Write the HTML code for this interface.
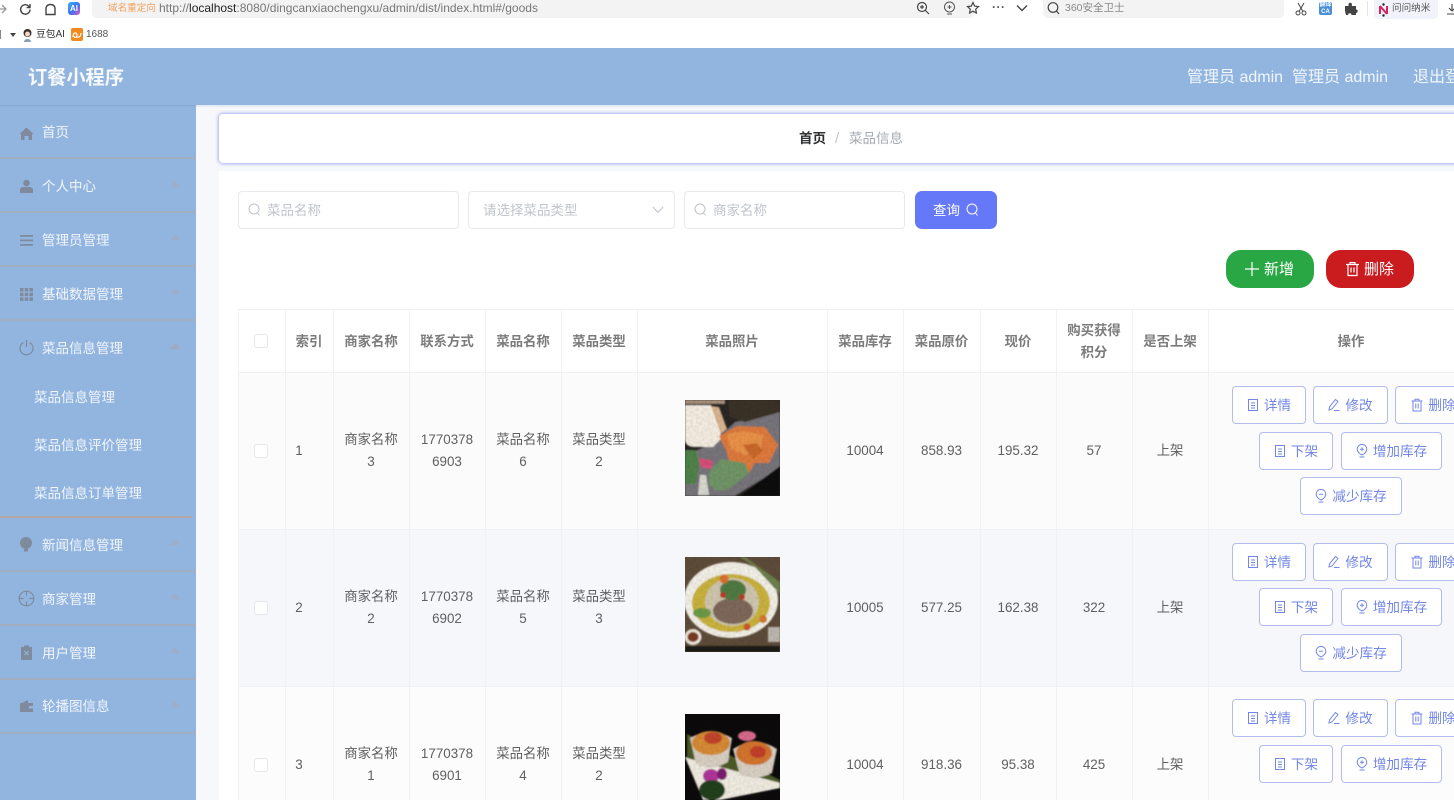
<!DOCTYPE html>
<html lang="zh"><head><meta charset="utf-8"><title>订餐小程序</title>
<style>
html,body{margin:0;padding:0;width:1454px;height:800px;overflow:hidden;background:#fff}
body{position:relative;font-family:"Liberation Sans","Noto Sans CJK SC",sans-serif;color:#555}
.a{position:absolute;white-space:nowrap}
svg{position:absolute;overflow:visible}
.hd{background:#92b5e0;position:absolute}
.menu{position:absolute;left:42px;font-size:13.5px;color:#f1f5fb;line-height:20px;white-space:nowrap;transform:translateY(1px)}
.sub{left:34px}
.dv{position:absolute;left:0;width:195px;height:2px;background:#a2afc0}
.arrow{position:absolute;left:170px;width:10px;height:6px;opacity:.85}
.ic{position:absolute;left:19px;width:15px;height:15px}
.vl{position:absolute;width:1px;top:309px;height:491px;background:#f0f1f5}
.hl{position:absolute;height:1px;left:238px;width:1216px;background:#f0f1f5}
.th{position:absolute;top:309px;height:63px;box-sizing:border-box;padding-top:2px;display:flex;align-items:center;justify-content:center;text-align:center;font-size:13.4px;font-weight:bold;color:#7b7b7b;line-height:19px}
.td{position:absolute;height:157px;display:flex;align-items:center;justify-content:center;text-align:center;font-size:13.4px;color:#5f5f5f;line-height:22px}
.cb{position:absolute;left:254px;width:12px;height:12px;border:1px solid #e6e7ec;border-radius:3px;background:#fff}
.b{position:absolute;height:36px;border:1px solid #b3bcec;border-radius:4px;background:#fff;color:#7286e6;font-size:13.6px;line-height:38px;box-sizing:content-box;text-align:center;white-space:nowrap}
.b svg{position:static;display:inline-block;width:12px;height:14px;vertical-align:-2px;margin-right:5px;fill:none;stroke:#7286e6;stroke-width:1}
.inp{position:absolute;top:191px;height:36px;background:#fff;border:1px solid #e8e9ee;border-radius:4px;font-size:13.5px;color:#c0c4cc;line-height:36px}
</style></head><body>

<svg width="0" height="0" style="left:0;top:0">
<defs>
<symbol id="i-doc" viewBox="0 0 12 14"><path d="M1.500 1.500h9v11h-9zM4 5h4M4 7.500h4M4 10h4"/></symbol>
<symbol id="i-pen" viewBox="0 0 12 14"><path d="M7.500 1.500l2.500 2-6 7.500-3 1 .5-3zM6 12.500h5.500"/></symbol>
<symbol id="i-del" viewBox="0 0 12 14"><path d="M.5 3h11M4 3V1.200h4V3M2 3v10h8V3M4.800 5.500v5M7.200 5.500v5"/></symbol>
<symbol id="i-add" viewBox="0 0 12 14"><path d="M6 11C3 9.500 1.200 7.500 1.200 5.200a4.800 4.800 0 0 1 9.600 0C10.800 7.500 9 9.500 6 11zM4 5.200h4M6 3.200v4M3.500 13h5"/></symbol>
<symbol id="i-sub" viewBox="0 0 12 14"><path d="M6 11C3 9.500 1.200 7.500 1.200 5.200a4.800 4.800 0 0 1 9.600 0C10.800 7.500 9 9.500 6 11zM4 5.200h4M3.500 13h5"/></symbol>
<filter id="n" x="0" y="0" width="100%" height="100%"><feTurbulence type="fractalNoise" baseFrequency=".35" numOctaves="2" seed="4"/><feColorMatrix type="matrix" values="0 0 0 0 0  0 0 0 0 0  0 0 0 0 0  1.800 0 0 0 -.55"/></filter>
</defs></svg>

<!-- browser chrome -->
<div class="a" style="left:92px;top:0;width:882px;height:18px;background:#f3f3f3;border-radius:0 0 5px 5px"></div>
<div class="a" style="left:1043px;top:0;width:241px;height:18px;background:#f3f3f3;border-radius:0 0 5px 5px"></div>
<div class="a" style="left:1374px;top:0;width:64px;height:19px;background:#f1f3fb;border-radius:0 0 5px 5px"></div>
<svg style="left:0;top:2px" width="10" height="14" fill="none" stroke="#999" stroke-width="1.3"><path d="M-1 7H5M2 3l4 4-4 4"/></svg>
<svg style="left:19px;top:3px" width="13" height="13" fill="none" stroke="#444" stroke-width="1.4"><path d="M11 6.500A4.700 4.700 0 1 1 9.500 3L11 4.400M11 1v3.600H7.600"/></svg>
<svg style="left:44px;top:3px" width="13" height="13" fill="none" stroke="#444" stroke-width="1.4"><path d="M2 11.500V6q0-4.500 4.500-4.500T11 6v5.500z"/></svg>
<div class="a" style="left:68px;top:2px;width:12px;height:13px;border-radius:3px;background:linear-gradient(135deg,#33b5f5,#3f6ff0 55%,#e35bc0);color:#fff;font-size:8px;font-weight:bold;line-height:13px;text-align:center">AI</div>
<div class="a" style="left:108px;top:2px;font-size:9.600px;line-height:14px;color:#f0a25c">域名重定向</div>
<div class="a" style="left:159px;top:0;font-size:12px;line-height:16px;color:#777">http://<span style="color:#222">localhost</span>:8080/dingcanxiaochengxu/admin/dist/index.html#/goods</div>
<svg style="left:916px;top:1px" width="14" height="14" fill="none" stroke="#444" stroke-width="1.200"><circle cx="6" cy="6" r="4.500"/><path d="M9.500 9.500L13 13M4 6h4M6 4v4"/></svg>
<svg style="left:943px;top:1px" width="13" height="14" fill="none" stroke="#555" stroke-width="1"><circle cx="6.500" cy="6" r="5"/><path d="M4.500 6h4M6.500 4v4M4 13h5"/></svg>
<svg style="left:966px;top:1px" width="14" height="14" fill="none" stroke="#444" stroke-width="1.200"><path d="M7 1.500l1.700 3.600 3.800.5-2.800 2.600.7 3.800L7 10.200 3.600 12l.7-3.800L1.500 5.600l3.800-.5z"/></svg>
<div class="a" style="left:992px;top:0;font-size:12px;line-height:14px;font-weight:bold;color:#555;letter-spacing:.5px">···</div>
<svg style="left:1016px;top:4px" width="12" height="9" fill="none" stroke="#444" stroke-width="1.400"><path d="M1 1.500l5 5 5-5"/></svg>
<svg style="left:1047px;top:1px" width="14" height="15" fill="none" stroke="#444" stroke-width="1.200"><circle cx="6" cy="6.500" r="4.800"/><path d="M9.500 10l2.500 3"/></svg>
<div class="a" style="left:1065px;top:1px;font-size:10.500px;line-height:15px;color:#888">360安全卫士</div>
<svg style="left:1295px;top:2px" width="12" height="14" fill="none" stroke="#444" stroke-width="1"><circle cx="3" cy="11" r="2"/><circle cx="9" cy="11" r="2"/><path d="M4 9.500L9 1M8 9.500L3 1"/></svg>
<div class="a" style="left:1319px;top:2px;width:13px;height:13px;border-radius:2px;background:#4a8fd8;color:#fff;font-size:6px;line-height:6.500px;text-align:center;font-weight:bold">翻译<br>CA</div>
<svg style="left:1344px;top:2px" width="14" height="13" fill="#444"><path d="M1 4h3.500V2.500a1.700 1.700 0 0 1 3.400 0V4H12v3.500a1.700 1.700 0 0 1 0 3.400V13H7.500a1.700 1.700 0 0 0-3.400 0H2L1 9z"/></svg>
<div class="a" style="left:1367px;top:1px;width:1px;height:15px;background:#e5e5e5"></div>
<svg style="left:1378px;top:3px" width="11" height="14"><path d="M2 3v8M9 3v8M2 3l7 8" stroke="#d9265e" stroke-width="2" fill="none"/><circle cx="5.500" cy="1.500" r="1.200" fill="#222"/><circle cx="5.500" cy="12.500" r="1.200" fill="#222"/></svg>
<div class="a" style="left:1392px;top:2px;font-size:9.600px;line-height:14px;color:#555">问问纳米</div>
<svg style="left:1447px;top:3px" width="10" height="13" fill="none" stroke="#444" stroke-width="1.100"><path d="M5 1v7M2 5l3 3 3-3M0 11h10"/></svg>

<div class="a" style="left:-2px;top:30px;width:3px;height:9px;background:#888"></div>
<div class="a" style="left:10px;top:33px;width:0;height:0;border:3px solid transparent;border-top:4px solid #444;border-bottom:0"></div>
<svg style="left:22px;top:28px" width="11" height="14"><circle cx="5.500" cy="5" r="4" fill="#3b2f2c"/><circle cx="5.500" cy="6" r="2.500" fill="#f1d8c8"/><path d="M2 14c0-4 7-4 7 0z" fill="#88a0bf"/></svg>
<div class="a" style="left:36px;top:28px;font-size:9.800px;line-height:14px;color:#333">豆包AI</div>
<div class="a" style="left:71px;top:28px;width:12px;height:13px;border-radius:2px;background:#f28a22"></div>
<svg style="left:72px;top:31px" width="10" height="8" fill="none" stroke="#fff" stroke-width="1.200"><path d="M1 6c0-5 4-5 4-2s-3 3-3 1M5 6c2 1 4-1 4-4"/></svg>
<div class="a" style="left:86px;top:28px;font-size:10px;line-height:14px;color:#555">1688</div>

<!-- header -->
<div class="hd" style="left:0;top:48px;width:1454px;height:58px"></div>
<div class="a" style="left:28px;top:65px;font-size:19.200px;line-height:28px;font-weight:bold;color:#f6f9fd">订餐小程序</div>
<div class="a" style="left:1187px;top:67px;font-size:16px;line-height:22px;color:#f2f6fc">管理员 admin</div>
<div class="a" style="left:1292px;top:67px;font-size:16px;line-height:22px;color:#f2f6fc">管理员 admin</div>
<div class="a" style="left:1413px;top:67px;font-size:16px;line-height:22px;color:#f2f6fc">退出登录</div>

<!-- sidebar -->
<div class="hd" style="left:0;top:106px;width:196px;height:694px"></div>
<div class="a" style="left:0;top:105px;width:196px;height:1px;background:#84a6d1"></div>
<div class="a" style="left:196px;top:106px;width:1258px;height:694px;background:#f6f8fb"></div>
<div class="a" style="left:196px;top:105px;width:1258px;height:2px;background:#e4ebf5"></div>

<div class="dv" style="top:157px"></div><div class="dv" style="top:211px"></div><div class="dv" style="top:265px"></div><div class="dv" style="top:319px"></div><div class="dv" style="top:516px;background:#b4a7a8;width:192px"></div><div class="dv" style="top:570px"></div><div class="dv" style="top:624px"></div><div class="dv" style="top:678px"></div><div class="dv" style="top:732px"></div>

<div class="menu" style="top:122px">首页</div>
<div class="menu" style="top:176px">个人中心</div>
<div class="menu" style="top:230px">管理员管理</div>
<div class="menu" style="top:284px">基础数据管理</div>
<div class="menu" style="top:338px">菜品信息管理</div>
<div class="menu sub" style="top:387px">菜品信息管理</div>
<div class="menu sub" style="top:435px">菜品信息评价管理</div>
<div class="menu sub" style="top:483px">菜品信息订单管理</div>
<div class="menu" style="top:535px">新闻信息管理</div>
<div class="menu" style="top:589px">商家管理</div>
<div class="menu" style="top:643px">用户管理</div>
<div class="menu" style="top:696px">轮播图信息</div>

<svg class="ic" style="top:126px" viewBox="0 0 15 15" fill="#7f8b9c"><path d="M7.500 1.500L14.500 8H13v6H9.500v-4h-4v4H2V8H.5z"/></svg>
<svg class="ic" style="top:179px" viewBox="0 0 15 15" fill="#7f8b9c"><circle cx="7.500" cy="4" r="3.300"/><path d="M1 14v-3c0-2 2-3 3.500-3h6c1.500 0 3.500 1 3.500 3v3z"/></svg>
<svg class="ic" style="top:233px" viewBox="0 0 15 15" fill="#7f8b9c"><rect x="1" y="2" width="13" height="1.800"/><rect x="1" y="6.500" width="13" height="1.800"/><rect x="1" y="11" width="13" height="1.800"/></svg>
<svg class="ic" style="top:287px" viewBox="0 0 15 15" fill="#7f8b9c"><rect x="1" y="1" width="3.500" height="3.500"/><rect x="5.700" y="1" width="3.500" height="3.500"/><rect x="10.400" y="1" width="3.500" height="3.500"/><rect x="1" y="5.700" width="3.500" height="3.500"/><rect x="5.700" y="5.700" width="3.500" height="3.500"/><rect x="10.400" y="5.700" width="3.500" height="3.500"/><rect x="1" y="10.400" width="3.500" height="3.500"/><rect x="5.700" y="10.400" width="3.500" height="3.500"/><rect x="10.400" y="10.400" width="3.500" height="3.500"/></svg>
<svg class="ic" style="top:340px" viewBox="0 0 15 15" fill="none" stroke="#7f8b9c" stroke-width="1.200"><path d="M4.500 2.500a6.500 6.500 0 1 0 6 0M7.500 0v7"/></svg>
<svg class="ic" style="top:537px" viewBox="0 0 15 15" fill="#7f8b9c"><circle cx="7" cy="6" r="6"/><rect x="5" y="12" width="4" height="2.500"/></svg>
<svg class="ic" style="top:590px;left:18px;width:17px;height:17px" viewBox="0 0 15 15" fill="none" stroke="#7f8b9c" stroke-width="1"><circle cx="7.500" cy="7.500" r="6.500"/><path d="M7.500 1v4M7.500 10v4M1 7.500h4M10 7.500h4"/></svg>
<svg class="ic" style="top:645px" viewBox="0 0 15 15" fill="#7f8b9c"><path d="M2 2h3V.5h5V2h3v13H2z"/><path d="M5.500 6l4 4M9.500 6l-4 4" stroke="#92b5e0" stroke-width="1"/></svg>
<svg class="ic" style="top:698px" viewBox="0 0 15 15" fill="#7f8b9c"><path d="M1 5h13v9H1zM3 5l6-3v3z"/><rect x="10" y="8" width="4" height="2.500" fill="#92b5e0"/></svg>

<svg class="arrow" style="top:181px" viewBox="0 0 10 6" fill="#9fadc6"><path d="M0 6l5-6 5 6z"/></svg>
<svg class="arrow" style="top:234px" viewBox="0 0 10 6" fill="#9fadc6"><path d="M0 6l5-6 5 6z"/></svg>
<svg class="arrow" style="top:288px" viewBox="0 0 10 6" fill="#9fadc6"><path d="M0 6l5-6 5 6z"/></svg>
<svg class="arrow" style="top:343px" viewBox="0 0 10 6" fill="#a3a6ba"><path d="M0 6l5-6 5 6z"/></svg>
<svg class="arrow" style="top:539px" viewBox="0 0 10 6" fill="#9fadc6"><path d="M0 6l5-6 5 6z"/></svg>
<svg class="arrow" style="top:593px" viewBox="0 0 10 6" fill="#9fadc6"><path d="M0 6l5-6 5 6z"/></svg>
<svg class="arrow" style="top:647px" viewBox="0 0 10 6" fill="#9fadc6"><path d="M0 6l5-6 5 6z"/></svg>
<svg class="arrow" style="top:701px" viewBox="0 0 10 6" fill="#9fadc6"><path d="M0 6l5-6 5 6z"/></svg>

<!-- breadcrumb -->
<div class="a" style="left:219px;top:114px;width:1260px;height:49px;background:#fff;border-radius:4px;box-shadow:0 0 3px 1px #a9aef0"></div>
<div class="a" style="left:799px;top:129px;font-size:13.500px;line-height:20px;font-weight:bold;color:#303133">首页</div>
<div class="a" style="left:835px;top:129px;font-size:15px;line-height:20px;color:#c0c4cc">/</div>
<div class="a" style="left:849px;top:129px;font-size:13.500px;line-height:20px;color:#a4a9b3">菜品信息</div>

<!-- panel -->
<div class="a" style="left:219px;top:171px;width:1235px;height:629px;background:#fff"></div>

<div class="inp" style="left:238px;width:219px"></div>
<svg style="left:248px;top:203px" width="13" height="14" fill="none" stroke="#c0c4cc" stroke-width="1"><circle cx="6" cy="6" r="5"/><path d="M9.500 10l2 2.500"/></svg>
<div class="a" style="left:267px;top:201px;font-size:13.500px;line-height:20px;color:#c0c4cc">菜品名称</div>
<div class="inp" style="left:468px;width:205px"></div>
<div class="a" style="left:483px;top:201px;font-size:13.500px;line-height:20px;color:#c0c4cc">请选择菜品类型</div>
<svg style="left:652px;top:206px" width="12" height="8" fill="none" stroke="#c0c4cc" stroke-width="1"><path d="M1 1l5 5.500L11 1"/></svg>
<div class="inp" style="left:684px;width:219px"></div>
<svg style="left:694px;top:203px" width="13" height="14" fill="none" stroke="#c0c4cc" stroke-width="1"><circle cx="6" cy="6" r="5"/><path d="M9.500 10l2 2.500"/></svg>
<div class="a" style="left:713px;top:201px;font-size:13.500px;line-height:20px;color:#c0c4cc">商家名称</div>
<div class="a" style="left:915px;top:191px;width:82px;height:38px;border-radius:7px;background:#6478f8"></div>
<div class="a" style="left:933px;top:201px;font-size:13.500px;line-height:20px;color:#fff">查询</div>
<svg style="left:966px;top:203px" width="13" height="14" fill="none" stroke="#fff" stroke-width="1"><circle cx="6" cy="6" r="5"/><path d="M9.500 10l2 2.500"/></svg>

<div class="a" style="left:1226px;top:250px;width:88px;height:38px;border-radius:15px;background:#29a745"></div>
<svg style="left:1245px;top:262px" width="14" height="14" stroke="#fff" stroke-width="1.200"><path d="M7 0v14M0 7h14"/></svg>
<div class="a" style="left:1264px;top:259px;font-size:15px;line-height:22px;color:#fff">新增</div>
<div class="a" style="left:1326px;top:250px;width:88px;height:38px;border-radius:15px;background:#ca1c1f"></div>
<svg style="left:1346px;top:262px" width="13" height="14" fill="none" stroke="#fff" stroke-width="1.200"><path d="M0 2.500h13M4 2.500V.6h5v1.900M2 2.500v11h9v-11M5 5.500v5M8 5.500v5"/></svg>
<div class="a" style="left:1364px;top:259px;font-size:15px;line-height:22px;color:#fff">删除</div>

<!-- table backgrounds -->
<div class="a" style="left:238px;top:373px;width:1216px;height:156px;background:#fbfbfc"></div>
<div class="a" style="left:238px;top:530px;width:1216px;height:156px;background:#f5f7fb"></div>
<div class="a" style="left:238px;top:687px;width:1216px;height:113px;background:#fcfcfd"></div>
<div class="hl" style="top:309px"></div><div class="hl" style="top:372px"></div><div class="hl" style="top:529px"></div><div class="hl" style="top:686px"></div>
<div class="vl" style="left:238px"></div><div class="vl" style="left:285px"></div><div class="vl" style="left:333px"></div><div class="vl" style="left:409px"></div><div class="vl" style="left:485px"></div><div class="vl" style="left:561px"></div><div class="vl" style="left:637px"></div><div class="vl" style="left:827px"></div><div class="vl" style="left:903px"></div><div class="vl" style="left:980px"></div><div class="vl" style="left:1056px"></div><div class="vl" style="left:1132px"></div><div class="vl" style="left:1208px"></div>

<!-- table header -->
<div class="cb" style="top:334px;left:254px"></div>
<div class="th" style="left:285px;width:48px">索引</div>
<div class="th" style="left:333px;width:76px">商家名称</div>
<div class="th" style="left:409px;width:76px">联系方式</div>
<div class="th" style="left:485px;width:76px">菜品名称</div>
<div class="th" style="left:561px;width:76px">菜品类型</div>
<div class="th" style="left:637px;width:190px">菜品照片</div>
<div class="th" style="left:827px;width:76px">菜品库存</div>
<div class="th" style="left:903px;width:77px">菜品原价</div>
<div class="th" style="left:980px;width:76px">现价</div>
<div class="th" style="left:1056px;width:76px;line-height:22px">购买获得<br>积分</div>
<div class="th" style="left:1132px;width:76px">是否上架</div>
<div class="th" style="left:1208px;width:286px">操作</div>

<!-- row 1 -->
<div class="cb" style="top:444px"></div>
<div class="td" style="top:372px;left:285px;width:28px">1</div>
<div class="td" style="top:372px;left:333px;width:76px">商家名称<br>3</div>
<div class="td" style="top:372px;left:409px;width:76px">1770378<br>6903</div>
<div class="td" style="top:372px;left:485px;width:76px">菜品名称<br>6</div>
<div class="td" style="top:372px;left:561px;width:76px">菜品类型<br>2</div>
<div class="td" style="top:372px;left:827px;width:76px">10004</div>
<div class="td" style="top:372px;left:903px;width:77px">858.93</div>
<div class="td" style="top:372px;left:980px;width:76px">195.32</div>
<div class="td" style="top:372px;left:1056px;width:76px">57</div>
<div class="td" style="top:372px;left:1132px;width:76px">上架</div>
<svg style="left:685px;top:400px" width="95" height="96" viewBox="0 0 95 96"><defs><filter id="f1" x="-10%" y="-10%" width="120%" height="120%"><feGaussianBlur stdDeviation=".7"/></filter><clipPath id="c1"><rect width="95" height="96"/></clipPath></defs><g clip-path="url(#c1)"><rect width="95" height="96" fill="#2a2624"/><g filter="url(#f1)"><path d="M95 12L50 22 25 45 0 55v41h50l45-28z" fill="#77757a"/><path d="M55 96L95 66v30z" fill="#0e0d0d"/><path d="M0 0h40v4H0z" fill="#a8917c"/><path d="M43 0h52v12L60 22 45 17z" fill="#3a3028"/><path d="M0 5h26l9 20 1 14-8 8H10q-10 0-10-8z" fill="#f4ece0"/><path d="M26 6l8 1 8 22-6 5z" fill="#d8b58f"/><path d="M34 36l18-10 28 1 13 18-9 18-14 0-6 10-8-7-12-4-2-10z" fill="#dd7a3c"/><path d="M42 34l18-3 18 4-2 14-16 6-14-6z" fill="#e9914a"/><path d="M58 45l14-2 6 8-10 8z" fill="#c8682c"/><path d="M0 50h11l3 14-3 20H0z" fill="#4f8248"/><path d="M24 72l12-13 24 4 4 10-20 16-12 2-8-6z" fill="#6f9466"/><path d="M14 58l14 3-2 8-10-2z" fill="#d94e78"/><path d="M15 75l6 0 3 20H13z" fill="#d8d8cf"/></g><rect width="95" height="96" filter="url(#n)" opacity=".08"/></g></svg>
<div class="b" style="left:1232px;top:386px;width:72px"><svg><use href="#i-doc"/></svg>详情</div>
<div class="b" style="left:1313px;top:386px;width:73px"><svg><use href="#i-pen"/></svg>修改</div>
<div class="b" style="left:1395px;top:386px;width:75px"><svg><use href="#i-del"/></svg>删除</div>
<div class="b" style="left:1259px;top:432px;width:72px"><svg><use href="#i-doc"/></svg>下架</div>
<div class="b" style="left:1341px;top:432px;width:99px"><svg><use href="#i-add"/></svg>增加库存</div>
<div class="b" style="left:1300px;top:477px;width:100px"><svg><use href="#i-sub"/></svg>减少库存</div>

<!-- row 2 -->
<div class="cb" style="top:601px"></div>
<div class="td" style="top:529px;left:285px;width:28px">2</div>
<div class="td" style="top:529px;left:333px;width:76px">商家名称<br>2</div>
<div class="td" style="top:529px;left:409px;width:76px">1770378<br>6902</div>
<div class="td" style="top:529px;left:485px;width:76px">菜品名称<br>5</div>
<div class="td" style="top:529px;left:561px;width:76px">菜品类型<br>3</div>
<div class="td" style="top:529px;left:827px;width:76px">10005</div>
<div class="td" style="top:529px;left:903px;width:77px">577.25</div>
<div class="td" style="top:529px;left:980px;width:76px">162.38</div>
<div class="td" style="top:529px;left:1056px;width:76px">322</div>
<div class="td" style="top:529px;left:1132px;width:76px">上架</div>
<svg style="left:685px;top:557px" width="95" height="95" viewBox="0 0 95 95"><defs><filter id="f2" x="-10%" y="-10%" width="120%" height="120%"><feGaussianBlur stdDeviation=".9"/></filter><clipPath id="c2"><rect width="95" height="95"/></clipPath></defs><g clip-path="url(#c2)"><rect width="95" height="95" fill="#5e4c3a"/><g filter="url(#f2)"><rect y="89" width="95" height="6" fill="#1b1a18"/><ellipse cx="46" cy="43" rx="47" ry="38" fill="#f2efe6"/><ellipse cx="46" cy="46" rx="39" ry="29" fill="#c9b23c"/><ellipse cx="47" cy="45" rx="27" ry="24" fill="#cfc6ae"/><ellipse cx="48" cy="54" rx="20" ry="13" fill="#7e675a"/><ellipse cx="48" cy="33" rx="13" ry="10" fill="#4f7a42"/><circle cx="38" cy="38" r="3" fill="#b83a26"/><circle cx="57" cy="40" r="3" fill="#b83a26"/><circle cx="39" cy="22" r="4.500" fill="#d9702d"/><ellipse cx="17" cy="56" rx="9" ry="5" fill="#6d9a45"/><circle cx="78" cy="62" r="4" fill="#d27a30"/><circle cx="62" cy="70" r="3.500" fill="#c95a2a"/><path d="M60 0l35 25v12L70 10 55 0z" fill="#6d8048"/><ellipse cx="8" cy="80" rx="8.500" ry="8" fill="#efe9dd"/><ellipse cx="8" cy="80" rx="5.500" ry="5" fill="#7a3a20"/><rect x="83" y="70" width="12" height="15" fill="#bcb7ae"/></g><rect width="95" height="95" filter="url(#n)" opacity=".08"/></g></svg>
<div class="b" style="left:1232px;top:543px;width:72px"><svg><use href="#i-doc"/></svg>详情</div>
<div class="b" style="left:1313px;top:543px;width:73px"><svg><use href="#i-pen"/></svg>修改</div>
<div class="b" style="left:1395px;top:543px;width:75px"><svg><use href="#i-del"/></svg>删除</div>
<div class="b" style="left:1259px;top:588px;width:72px"><svg><use href="#i-doc"/></svg>下架</div>
<div class="b" style="left:1341px;top:588px;width:99px"><svg><use href="#i-add"/></svg>增加库存</div>
<div class="b" style="left:1300px;top:634px;width:100px"><svg><use href="#i-sub"/></svg>减少库存</div>

<!-- row 3 -->
<div class="cb" style="top:758px"></div>
<div class="td" style="top:686px;left:285px;width:28px">3</div>
<div class="td" style="top:686px;left:333px;width:76px">商家名称<br>1</div>
<div class="td" style="top:686px;left:409px;width:76px">1770378<br>6901</div>
<div class="td" style="top:686px;left:485px;width:76px">菜品名称<br>4</div>
<div class="td" style="top:686px;left:561px;width:76px">菜品类型<br>2</div>
<div class="td" style="top:686px;left:827px;width:76px">10004</div>
<div class="td" style="top:686px;left:903px;width:77px">918.36</div>
<div class="td" style="top:686px;left:980px;width:76px">95.38</div>
<div class="td" style="top:686px;left:1056px;width:76px">425</div>
<div class="td" style="top:686px;left:1132px;width:76px">上架</div>
<svg style="left:685px;top:714px" width="95" height="86" viewBox="0 0 95 86"><defs><filter id="f3" x="-10%" y="-10%" width="120%" height="120%"><feGaussianBlur stdDeviation=".7"/></filter><clipPath id="c3"><rect width="95" height="86"/></clipPath></defs><g clip-path="url(#c3)"><rect width="95" height="86" fill="#0c0a0b"/><g filter="url(#f3)"><path d="M0 43l95 24v7L35 86H18z" fill="#f0ebe0"/><path d="M2 20l93 46v3L2 44z" fill="#4c5a26"/><ellipse cx="62" cy="22" rx="9" ry="5" fill="#d86b8c"/><path d="M5 24q21-12 42 0l-4 24q-17 10-32 2z" fill="#d8cfc2"/><ellipse cx="26" cy="29" rx="19" ry="12" fill="#d58a36"/><ellipse cx="28" cy="24" rx="9" ry="6" fill="#c1452a"/><path d="M48 35q22-14 44 0l-5 24q-16 8-32 2z" fill="#d8cfc2"/><ellipse cx="69" cy="39" rx="18" ry="12" fill="#d2752e"/><ellipse cx="73" cy="38" rx="8" ry="6" fill="#c2402a"/><ellipse cx="26" cy="62" rx="8" ry="7" fill="#b0369a"/><ellipse cx="37" cy="60" rx="5" ry="6" fill="#7d1e70"/><ellipse cx="27" cy="76" rx="13" ry="10" fill="#24401e"/></g><rect width="95" height="86" filter="url(#n)" opacity=".08"/></g></svg>
<div class="b" style="left:1232px;top:699px;width:72px"><svg><use href="#i-doc"/></svg>详情</div>
<div class="b" style="left:1313px;top:699px;width:73px"><svg><use href="#i-pen"/></svg>修改</div>
<div class="b" style="left:1395px;top:699px;width:75px"><svg><use href="#i-del"/></svg>删除</div>
<div class="b" style="left:1259px;top:745px;width:72px"><svg><use href="#i-doc"/></svg>下架</div>
<div class="b" style="left:1341px;top:745px;width:99px"><svg><use href="#i-add"/></svg>增加库存</div>

</body></html>
